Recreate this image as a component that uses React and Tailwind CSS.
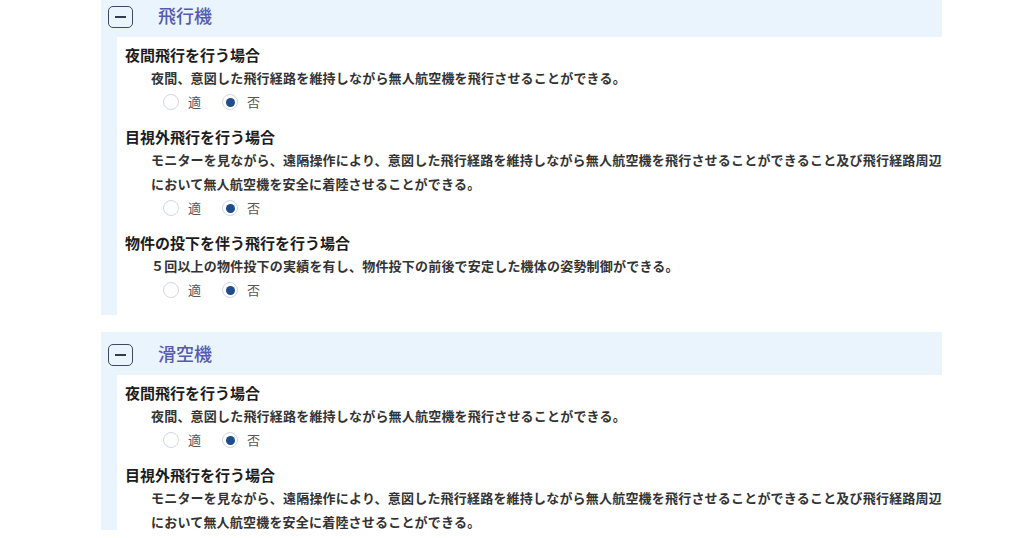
const sections = [
  {
    title: '飛行機',
    items: [
      {
        heading: '夜間飛行を行う場合',
        lines: ['夜間、意図した飛行経路を維持しながら無人航空機を飛行させることができる。'],
      },
      {
        heading: '目視外飛行を行う場合',
        lines: [
          'モニターを見ながら、遠隔操作により、意図した飛行経路を維持しながら無人航空機を飛行させることができること及び飛行経路周辺',
          'において無人航空機を安全に着陸させることができる。',
        ],
      },
      {
        heading: '物件の投下を伴う飛行を行う場合',
        lines: ['５回以上の物件投下の実績を有し、物件投下の前後で安定した機体の姿勢制御ができる。'],
      },
    ],
  },
  {
    title: '滑空機',
    items: [
      {
        heading: '夜間飛行を行う場合',
        lines: ['夜間、意図した飛行経路を維持しながら無人航空機を飛行させることができる。'],
      },
      {
        heading: '目視外飛行を行う場合',
        lines: [
          'モニターを見ながら、遠隔操作により、意図した飛行経路を維持しながら無人航空機を飛行させることができること及び飛行経路周辺',
          'において無人航空機を安全に着陸させることができる。',
        ],
        // the screenshot is cut before this row's radios
        noRadio: true,
      },
    ],
  },
];

function Radio({ checked, label }) {
  return (
    <label className="flex items-center gap-[9px]">
      <span className="w-4 h-4 rounded-full border border-[#d3d9e1] bg-white flex items-center justify-center">
        {checked && <span className="w-[9px] h-[9px] rounded-full bg-[#1f4c8c]" />}
      </span>
      <span className="text-[13px] text-[#555]">{label}</span>
    </label>
  );
}

function Item({ item }) {
  return (
    <div className={item.noRadio ? '' : 'mb-3'}>
      <h3 className="h-[22px] leading-[22px] text-[15px] font-bold text-[#1c1c1c]">{item.heading}</h3>
      <div className="pl-[26px] text-[13px] tracking-[0.2px] leading-[24px] font-semibold text-[#333] whitespace-nowrap">
        {item.lines.map((l, i) => (
          <div key={i}>{l}</div>
        ))}
      </div>
      {!item.noRadio && (
        <div className="h-6 pl-[38px] flex items-center gap-[21px]">
          <Radio label="適" />
          <Radio checked label="否" />
        </div>
      )}
    </div>
  );
}

function Section({ section }) {
  return (
    <section className="w-[841px] ml-[101px] bg-[#e9f4fd]">
      <div className="h-[43px] flex items-center pl-[7px]">
        <span className="w-[25px] h-[22px] mt-[2px] rounded-[5px] border-[1.5px] border-[#3c4866] flex items-center justify-center">
          <span className="w-[11px] h-[2px] bg-[#2f3a55]" />
        </span>
        <h2 className="ml-[25px] text-[18px] font-medium text-[#5659b0]">{section.title}</h2>
      </div>
      <div className="ml-4 bg-white pl-2 pt-[7px] pb-px">
        {section.items.map((item, i) => (
          <Item key={i} item={item} />
        ))}
      </div>
    </section>
  );
}

export default function App() {
  return (
    <div
      className="w-[1024px] h-[538px] bg-white"
      style={{ fontFamily: '"Noto Sans CJK JP", "Noto Sans", sans-serif' }}
    >
      <div className="h-[530px] overflow-hidden">
        <div className="-mt-[6px] flex flex-col gap-[17px]">
          {sections.map((s, i) => (
            <Section key={i} section={s} />
          ))}
        </div>
      </div>
    </div>
  );
}
